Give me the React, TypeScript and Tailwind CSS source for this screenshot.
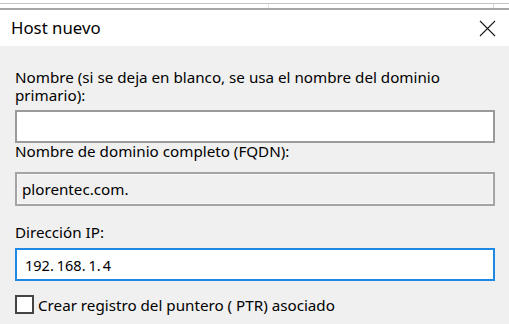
import React from "react";

const font = { fontFamily: '"Noto Sans", "Open Sans", sans-serif' };

function CloseIcon() {
  return (
    <svg width="17" height="17" viewBox="0 0 17 17" className="text-[#1a1a1a]">
      <path d="M1 1 L16 16 M16 1 L1 16" stroke="currentColor" strokeWidth="1.1" fill="none" />
    </svg>
  );
}

export default function App() {
  return (
    <div className="w-[509px] h-[324px] overflow-hidden bg-[#f0f0f0] text-black" style={font}>
      {/* strip of the window behind */}
      <div className="relative h-[10px] bg-white">
        <div className="absolute left-0 right-0 top-[3px] h-px bg-[#c4c4c4]" />
        <div className="absolute left-[268px] top-[4px] h-[5px] w-px bg-[#e4e4e4]" />
        <div className="absolute left-[493px] top-[4px] h-[5px] w-px bg-[#d8d8d8]" />
        <div className="absolute left-0 right-0 top-[8px] h-[2px] bg-[#a6a6a6]" />
      </div>

      <div className="flex h-[36px] items-center justify-between bg-white pl-[11px] pr-[13px]">
        <span className="text-[16.8px] leading-none">Host nuevo</span>
        <CloseIcon />
      </div>

      <div className="flex flex-col pl-[15px] pr-[14px] pt-[22px] text-[15.2px] leading-[18px]">
        <label>Nombre (si se deja en blanco, se usa el nombre del dominio primario):</label>
        <div className="mt-[6px] h-[33px] border-2 border-[#9a9a9a] bg-white" />

        <label className="-mt-px">Nombre de dominio completo (FQDN):</label>
        <div className="mt-[12px] flex h-[34px] items-center border-2 border-[#a4a4a4] bg-[#f0f0f0] pl-[5px] shadow-[inset_0_0_0_1px_#f8f8f8]">
          plorentec.com.
        </div>

        <label className="mt-[17px]">Dirección IP:</label>
        <div className="mt-[7px] flex h-[33px] items-center border-2 border-[#1e88e5] bg-white pl-[8px] text-[14.5px]">
          <span>192.</span>
          <span className="ml-[3px]">168.</span>
          <span className="ml-[3px]">1.</span>
          <span className="ml-[2px]">4</span>
        </div>

        <div className="mt-[14px] flex items-center gap-[4px]">
          <span className="h-[19px] w-[19px] shrink-0 border-2 border-[#444] bg-white" />
          <span>Crear registro del puntero ( PTR) asociado</span>
        </div>
      </div>
    </div>
  );
}
